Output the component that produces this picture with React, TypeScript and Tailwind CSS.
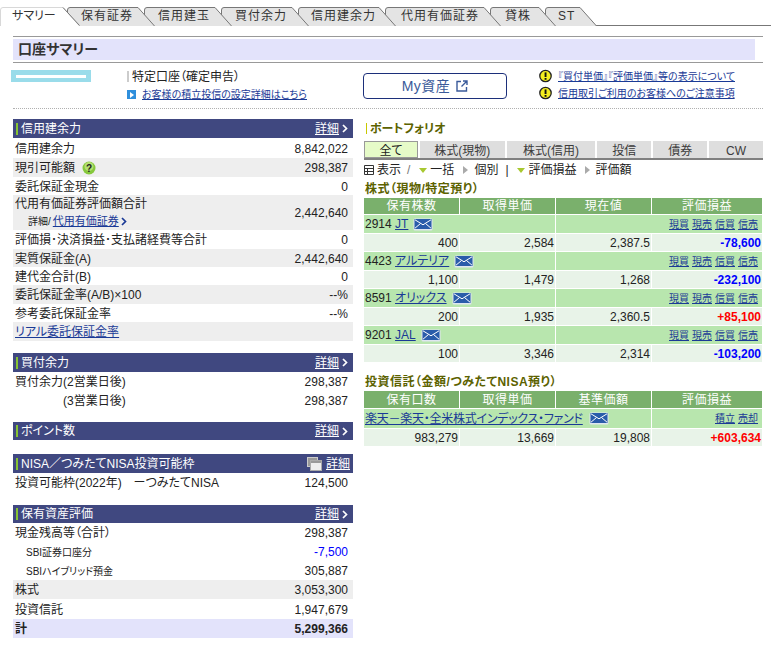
import React from "react";

const tabs = [
  { label: "サマリー", width: "w-[67px]", svgWidth: 80, pad: "pl-[12px]", active: true },
  { label: "保有証券", width: "w-[77px]", svgWidth: 88, pad: "pl-[14px]" },
  { label: "信用建玉", width: "w-[77px]", svgWidth: 88, pad: "pl-[14px]" },
  { label: "買付余力", width: "w-[77px]", svgWidth: 88, pad: "pl-[14px]" },
  { label: "信用建余力", width: "w-[87px]", svgWidth: 98, pad: "pl-[13px]" },
  { label: "代用有価証券", width: "w-[105px]", svgWidth: 116, pad: "pl-[16px]" },
  { label: "貸株", width: "w-[55px]", svgWidth: 66, pad: "pl-[15px]" },
  { label: "ST", width: "w-[52px]", svgWidth: 52, pad: "pl-[13px]" },
];

function Tab({ tab, z }: { tab: (typeof tabs)[number]; z: number }) {
  const w = tab.svgWidth;
  const fill = tab.active ? "#ffffff" : "#e4e4e4";
  return (
    <div className={`relative h-[19px] shrink-0 ${tab.width}`} style={{ zIndex: z }}>
      <svg className="absolute left-0 top-0" width={w} height={19}>
        <path d={`M0.5 19V3Q0.5 0.5 3 0.5H${w - 17}L${w - 0.5} 19Z`} fill={fill} />
        <path
          d={`M0.5 19V3Q0.5 0.5 3 0.5H${w - 17}L${w - 0.5} 19`}
          fill="none"
          stroke={tab.active ? "#d8d8d8" : "#777777"}
        />
        {tab.active && <path d={`M${w - 17} 0.5L${w - 0.5} 18.5`} fill="none" stroke="#777777" />}
      </svg>
      <span className={`relative block ${tab.pad} text-[12px] leading-[19px] text-[#333] ${tab.active ? "" : "tracking-[1px]"}`}>
        {tab.label}
      </span>
    </div>
  );
}

function Warn() {
  return (
    <svg width="13" height="14" viewBox="0 0 13 14" className="shrink-0">
      <circle cx="6.5" cy="7" r="5.7" fill="#f4ee20" stroke="#222" strokeWidth="1.3" />
      <rect x="5.6" y="3.4" width="1.9" height="4.6" fill="#111" />
      <rect x="5.6" y="9" width="1.9" height="1.8" fill="#111" />
    </svg>
  );
}

function Mail() {
  return (
    <svg width="20" height="13" viewBox="0 0 20 13" className="shrink-0">
      <rect x="0.5" y="0.5" width="19" height="12" rx="1.5" fill="#dfe6f0" />
      <rect x="1.5" y="1" width="17" height="10" fill="#2a5caa" />
      <path d="M2 1.8L10 6.8L18 1.8M2 10.2L7.5 5.5M18 10.2L12.5 5.5" fill="none" stroke="#fff" strokeWidth="1" />
    </svg>
  );
}

function Chevron({ color = "#fff" }: { color?: string }) {
  return (
    <svg width="6" height="9" viewBox="0 0 6 9" className="shrink-0">
      <path d="M1 1L4.5 4.5L1 8" fill="none" stroke={color} strokeWidth="1.7" />
    </svg>
  );
}

function Header({ title, popup, className = "h-[19px]" }: { title: React.ReactNode; popup?: boolean; className?: string }) {
  return (
    <div className={`flex items-center bg-[#404880] pl-[3px] text-[12px] text-white ${popup ? "pr-[3px]" : "pr-[5px]"} ${className}`}>
      <span className="mr-[3px] h-[12px] w-[2px] bg-[#86c232]" />
      <span>{title}</span>
      <span className="ml-auto flex items-center gap-[3px]">
        {popup ? (
          <>
            <svg width="15" height="14" viewBox="0 0 15 14" className="mr-[1px]">
              <rect x="0.5" y="0.5" width="10" height="9" fill="#9a9a9a" stroke="#ccc" />
              <rect x="3.5" y="3.5" width="11" height="10" fill="#eee" stroke="#aaa" />
              <rect x="4" y="4" width="10" height="2" fill="#999" />
            </svg>
            <span className="underline">詳細</span>
          </>
        ) : (
          <>
            <span className="underline">詳細</span>
            <Chevron />
          </>
        )}
      </span>
    </div>
  );
}

function Row({
  label,
  value,
  gray,
  className = "h-[19px]",
  valueClass = "",
}: {
  label: React.ReactNode;
  value?: string;
  gray?: boolean;
  className?: string;
  valueClass?: string;
}) {
  return (
    <div className={`flex items-center justify-between pl-[2px] pr-[5px] pt-[1px] text-[12px] text-[#222] ${gray ? "bg-[#eeeeee]" : ""} ${className}`}>
      <div>{label}</div>
      {value && <div className={valueClass}>{value}</div>}
    </div>
  );
}

const stocks = [
  { code: "2914", name: "JT", qty: "400", cost: "2,584", now: "2,387.5", pl: "-78,600", up: false },
  { code: "4423", name: "アルテリア", qty: "1,100", cost: "1,479", now: "1,268", pl: "-232,100", up: false },
  { code: "8591", name: "オリックス", qty: "200", cost: "1,935", now: "2,360.5", pl: "+85,100", up: true },
  { code: "9201", name: "JAL", qty: "100", cost: "3,346", now: "2,314", pl: "-103,200", up: false },
];

function Trade({ items }: { items: string[] }) {
  return (
    <div className="flex justify-end gap-[3px] pr-[4px] text-[10px] text-[#1a3a96] underline">
      {items.map((t) => (
        <span key={t}>{t}</span>
      ))}
    </div>
  );
}

function HeadCells({ cells, height }: { cells: string[]; height: string }) {
  return (
    <>
      {cells.map((c) => (
        <div key={c} className={`flex items-center justify-center bg-[#7ab06c] text-[12px] tracking-[0.5px] text-white ${height}`}>
          {c}
        </div>
      ))}
    </>
  );
}

function Nums({ row, up }: { row: string[]; up: boolean }) {
  return (
    <>
      {row.map((v, i) => (
        <div
          key={i}
          className={`flex h-[17px] items-center justify-end bg-[#e8f3e8] pr-[1px] text-[12px] ${
            i === 3 ? `font-bold ${up ? "text-[#ff0000]" : "text-[#0000ff]"}` : "text-[#222]"
          }`}
        >
          {v}
        </div>
      ))}
    </>
  );
}

export default function App() {
  return (
    <div className="relative h-[645px] w-[771px] overflow-hidden bg-white pt-[7px] [font-family:'Liberation_Sans','Noto_Sans_CJK_JP',sans-serif] [font-feature-settings:'palt']">
      {/* tabs */}
      <div className="relative flex h-[19px] after:absolute after:bottom-0 after:left-[67px] after:right-0 after:h-px after:bg-[#777]">
        {tabs.map((t, i) => (
          <Tab key={t.label} tab={t} z={20 - i} />
        ))}
      </div>

      <div className="ml-[13px] mt-[10px] w-[750px] border-y border-[#999] py-[2px]">
        <div className="flex h-[21px] w-[742px] items-center bg-[#e3e3fb] pl-[5px] text-[14px] font-bold text-[#333]">口座サマリー</div>
      </div>

      {/* account info */}
      <div className="ml-[13px] mt-[6px] flex h-[40px] w-[750px] border-b border-dotted border-[#b0b0b0]">
        <div className="-ml-[2px] mt-[1px] flex h-[12px] w-[80px] shrink-0 items-center justify-center bg-[#9adcea]">
          <div className="h-[3px] w-[70px] bg-white" />
        </div>
        <div className="ml-[36px] w-[180px] shrink-0 text-[12px] text-[#222]">
          <div className="flex h-[15px] items-center">
            <span className="mr-[3px] h-[11px] w-[2px] bg-[#ccc]" />
            <span className="whitespace-nowrap">特定口座（確定申告）</span>
          </div>
          <div className="mt-[3px] flex items-center gap-[6px] whitespace-nowrap text-[10px] text-[#1a3a96]">
            <span className="flex h-[9px] w-[9px] shrink-0 items-center justify-center bg-[#2f8fdc]">
              <span className="ml-[1px] border-y-[3px] border-l-[4px] border-y-transparent border-l-white" />
            </span>
            <span className="underline">お客様の積立投信の設定詳細はこちら</span>
          </div>
        </div>
        <div className="ml-[56px] mt-[4px] flex h-[26px] w-[144px] shrink-0 items-center justify-center gap-[6px] rounded-[4px] border border-[#1c2f7a] text-[14px] text-[#3a5a9a]">
          <span className="tracking-[0.5px]">My資産</span>
          <svg width="12" height="12" viewBox="0 0 12 12">
            <path d="M5 1.5H1V11H10.5V7M7 1H11V5M11 1L5.5 6.5" fill="none" stroke="#3a5a9a" strokeWidth="1.4" />
          </svg>
        </div>
        <div className="ml-[32px] flex flex-col gap-[3px] whitespace-nowrap text-[10px] text-[#1a3a96]">
          <div className="flex h-[14px] items-center gap-[6px]">
            <Warn />
            <span className="underline">『買付単価』『評価単価』等の表示について</span>
          </div>
          <div className="flex h-[14px] items-center gap-[6px]">
            <Warn />
            <span className="underline">信用取引ご利用のお客様へのご注意事項</span>
          </div>
        </div>
      </div>

      {/* main columns */}
      <div className="mt-[10px] flex pl-[13px]">
        <div className="w-[340px]">
          <Header title="信用建余力" />
          <Row label="信用建余力" value="8,842,022" className="h-[20px]" />
          <Row
            gray
            label={
              <span className="flex items-center gap-[7px]">
                現引可能額
                <svg width="14" height="14" viewBox="0 0 14 14">
                  <circle cx="7" cy="7" r="6.5" fill="#86c83c" />
                  <circle cx="7" cy="5.5" r="4.5" fill="#b4e070" />
                  <text x="7" y="11" textAnchor="middle" fontSize="10" fontWeight="bold" fill="#222">?</text>
                </svg>
              </span>
            }
            value="298,387"
          />
          <Row label="委託保証金現金" value="0" className="h-[18px]" />
          <Row
            gray
            className="h-[35px]"
            label={
              <div>
                <div className="leading-[17px]">代用有価証券評価額合計</div>
                <div className="flex items-center gap-[2px] pl-[13px] text-[10px] leading-[17px]">
                  詳細/ <span className="text-[11px] text-[#1a3a96] underline">代用有価証券</span>
                  <Chevron color="#1a3a96" />
                </div>
              </div>
            }
            value="2,442,640"
          />
          <Row label="評価損･決済損益･支払諸経費等合計" value="0" />
          <Row gray label="実質保証金(A)" value="2,442,640" className="h-[18px]" />
          <Row label="建代金合計(B)" value="0" className="h-[18px]" />
          <Row gray label="委託保証金率(A/B)×100" value="--%" />
          <Row label="参考委託保証金率" value="--%" className="h-[18px]" />
          <Row gray label={<span className="text-[#1a3a96] underline">リアル委託保証金率</span>} />

          <Header title="買付余力" className="mt-[12px] h-[19px]" />
          <Row label="買付余力(2営業日後)" value="298,387" />
          <Row label={<span className="pl-[48px]">(3営業日後)</span>} value="298,387" className="h-[18px]" />

          <Header title="ポイント数" className="mt-[13px] h-[18px]" />

          <Header title="NISA／つみたてNISA投資可能枠" popup className="mt-[14px] h-[19px]" />
          <Row label="投資可能枠(2022年)　ーつみたてNISA" value="124,500" />

          <Header title="保有資産評価" className="mt-[13px] h-[18px]" />
          <Row label="現金残高等（合計）" value="298,387" />
          <Row label={<span className="pl-[11px] text-[10px]">SBI証券口座分</span>} value="-7,500" valueClass="text-[#0000ff]" />
          <Row label={<span className="pl-[11px] text-[10px]">SBIハイブリッド預金</span>} value="305,887" />
          <Row gray label="株式" value="3,053,300" />
          <Row label="投資信託" value="1,947,679" className="h-[20px]" />
          <div className="flex h-[19px] items-center justify-between bg-[#e3e3fb] pl-[2px] pr-[5px] text-[12px] font-bold text-[#222]">
            <span>計</span>
            <span>5,299,366</span>
          </div>
        </div>

        <div className="ml-[11px] w-[399px]">
          <div className="flex h-[16px] items-center pl-[2px] pt-[3px] text-[12px] font-bold text-[#5c6200]">
            <span className="mr-[3px] h-[11px] w-[1px] bg-[#c8c800]" />
            ポートフォリオ
          </div>
          <div className="mt-[6px] flex h-[19px] items-start gap-[2px] border-b-2 border-[#808080] text-[12px] text-[#3c3c3c]">
            <div className="flex h-[17px] w-[54px] items-center justify-center border border-[#999] bg-[#e6fbc8] pt-[2px] text-[#222]">全て</div>
            {[
              ["株式(現物)", "w-[85px]"],
              ["株式(信用)", "w-[89px]"],
              ["投信", "w-[54px]"],
              ["債券", "w-[54px]"],
              ["CW", "w-[54px]"],
            ].map(([label, w]) => (
              <div key={label} className={`flex h-[17px] items-center justify-center bg-[#dedede] pt-[2px] ${w}`}>
                {label}
              </div>
            ))}
          </div>

          <div className="mt-[2px] flex h-[16px] items-center text-[12px] text-[#222]">
            <svg width="10" height="10" viewBox="0 0 10 10" className="mr-[3px]">
              <path d="M0.5 0.5H9.5V9.5H0.5ZM0.5 3.5H9.5M0.5 6.5H9.5M3.5 3.5V9.5" fill="#fff" stroke="#333" />
            </svg>
            <span>表示</span>
            <span className="ml-[6px] mr-[9px] text-[#777]">/</span>
            <span className="mr-[3px] border-x-[4.5px] border-t-[5px] border-x-transparent border-t-[#a8c830]" />
            <span>一括</span>
            <span className="ml-[9px] mr-[6px] border-y-[4px] border-l-[5px] border-y-transparent border-l-[#aaa]" />
            <span>個別</span>
            <span className="ml-[7px] mr-[8px]">|</span>
            <span className="mr-[4px] border-x-[4.5px] border-t-[5px] border-x-transparent border-t-[#a8c830]" />
            <span>評価損益</span>
            <span className="ml-[8px] mr-[6px] border-y-[4px] border-l-[5px] border-y-transparent border-l-[#aaa]" />
            <span>評価額</span>
          </div>

          <div className="flex h-[20px] items-center pl-[1px] pt-[2px] text-[12px] font-bold tracking-[0.5px] text-[#5c6200]">株式（現物/特定預り）</div>

          <div className="grid grid-cols-[95px_95px_95px_110px] gap-[1px]">
            <HeadCells height="h-[16px]" cells={["保有株数", "取得単価", "現在値", "評価損益"]} />
            {stocks.map((s) => (
              <React.Fragment key={s.code}>
                <div className="col-span-2 flex h-[18px] items-center gap-[5px] bg-[#b8e6ae] pl-[1px] text-[12px] text-[#222]">
                  <span>
                    {s.code} <span className="text-[#1a3a96] underline">{s.name}</span>
                  </span>
                  <Mail />
                </div>
                <div className="col-span-2 flex h-[18px] items-center justify-end bg-[#b8e6ae]">
                  <Trade items={["現買", "現売", "信買", "信売"]} />
                </div>
                <Nums row={[s.qty, s.cost, s.now, s.pl]} up={s.up} />
              </React.Fragment>
            ))}
          </div>

          <div className="mb-[2px] mt-[11px] flex h-[16px] items-center pl-[1px] pt-[2px] text-[12px] font-bold tracking-[0.5px] text-[#5c6200]">投資信託（金額/つみたてNISA預り）</div>
          <div className="grid grid-cols-[95px_95px_95px_110px] gap-[1px]">
            <HeadCells height="h-[17px]" cells={["保有口数", "取得単価", "基準価額", "評価損益"]} />
            <div className="col-span-3 flex h-[19px] items-center gap-[6px] bg-[#b8e6ae] pl-[1px] text-[12px] text-[#1a3a96]">
              <span className="underline tracking-[-0.25px]">楽天－楽天・全米株式インデックス・ファンド</span>
              <Mail />
            </div>
            <div className="flex h-[19px] items-center justify-end bg-[#b8e6ae]">
              <Trade items={["積立", "売却"]} />
            </div>
            <Nums row={["983,279", "13,669", "19,808", "+603,634"]} up />
          </div>
        </div>
      </div>
    </div>
  );
}
